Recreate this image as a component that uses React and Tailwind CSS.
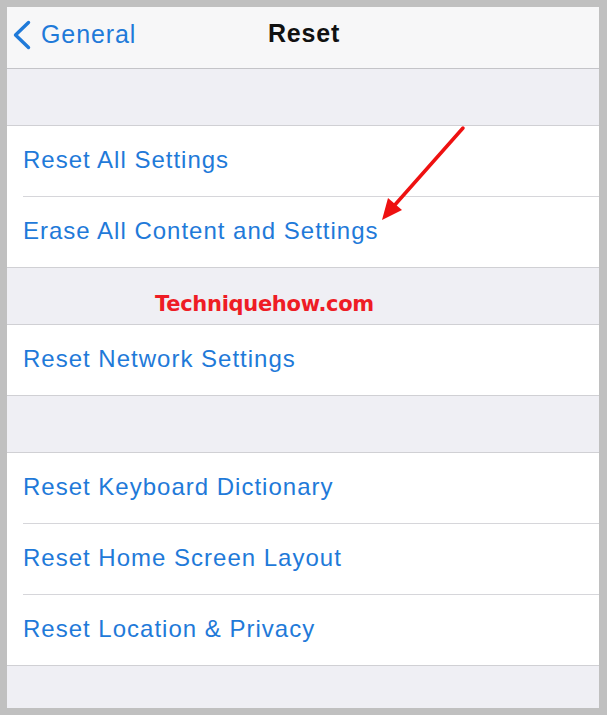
import React from "react";

const font = { fontFamily: '"Liberation Sans", Arial, sans-serif' };

function Row({ children, last }) {
  return (
    <div className="bg-white pl-[16px]">
      <div className={`flex items-center pb-[2px] ${last ? "h-[70px]" : "h-[71px] border-b border-[#d6d6da]"}`}>
        <span className="text-[24px] text-[#1f7ad9] tracking-[1px]">{children}</span>
      </div>
    </div>
  );
}

function Group({ items }) {
  return (
    <div className="border-y border-[#d0d0d4]">
      {items.map((t, i) => (
        <Row key={t} last={i === items.length - 1}>{t}</Row>
      ))}
    </div>
  );
}

export default function App() {
  return (
    <div className="w-[607px] h-[715px] bg-[#c0c0c0] pt-[7px] pl-[7px] pr-[8px] pb-[7px]" style={font}>
      <div className="relative h-[701px] bg-[#efeff4] flex flex-col overflow-hidden">
        <div className="h-[62px] shrink-0 bg-[#f7f7f8] border-b border-[#c4c4c8] relative flex items-center justify-center pb-[8px]">
          <div className="absolute left-[5px] top-0 h-full flex items-center gap-[9px] pb-[5px]">
            <svg width="20" height="30" viewBox="0 0 20 30">
              <path d="M16.5 2.5 L3.5 15 L16.5 27.5" fill="none" stroke="#1f7ad9" strokeWidth="3.4" strokeLinecap="round" strokeLinejoin="round" />
            </svg>
            <span className="text-[25px] text-[#1f7ad9] tracking-[0.9px]">General</span>
          </div>
          <span className="text-[25px] font-bold text-[#111] tracking-[0.8px] ml-[2px]">Reset</span>
        </div>
        <div className="h-[56px] shrink-0" />
        <Group items={["Reset All Settings", "Erase All Content and Settings"]} />
        <div className="h-[56px] shrink-0 flex items-center pl-[148px] pt-[17px]">
          <span className="text-[21px] font-bold text-[#ee1c25]" style={{ fontFamily: '"DejaVu Sans", Verdana, sans-serif', letterSpacing: "-0.3px" }}>Techniquehow.com</span>
        </div>
        <Group items={["Reset Network Settings"]} />
        <div className="h-[56px] shrink-0" />
        <Group items={["Reset Keyboard Dictionary", "Reset Home Screen Layout", "Reset Location & Privacy"]} />
        <svg className="absolute left-0 top-0" width="592" height="701" viewBox="0 0 592 701">
          <line x1="456" y1="121" x2="386" y2="200" stroke="#ee1111" strokeWidth="3.5" strokeLinecap="round" />
          <polygon points="375,213 381,191 395,203" fill="#ee1111" />
        </svg>
      </div>
    </div>
  );
}
